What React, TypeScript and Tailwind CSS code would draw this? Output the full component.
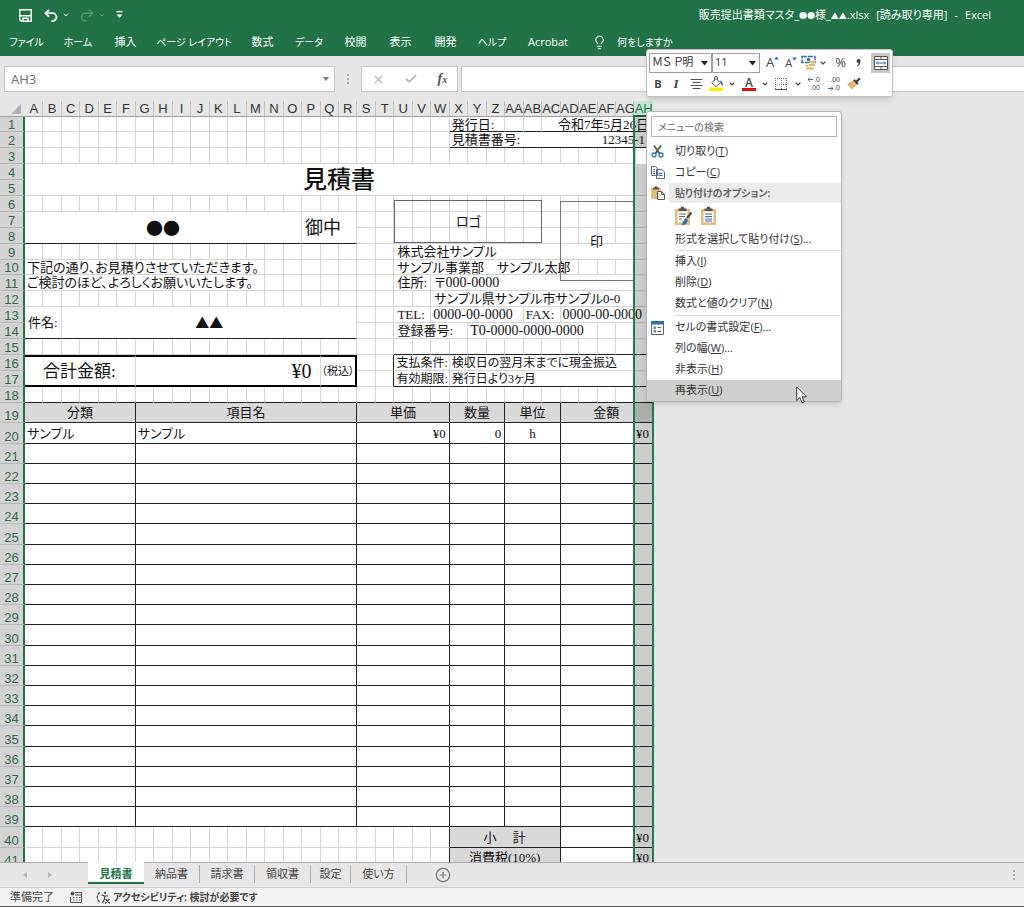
import React from 'react';
import clsx from 'clsx';
import { ChevronDown, Lightbulb, Check, X, CirclePlus } from 'lucide-react';

const ribbonTabs = [
  { label: 'ファイル', width: 'w-[53px]', kana: true },
  { label: 'ホーム', width: 'w-[50px]', kana: true },
  { label: '挿入', width: 'w-[45px]' },
  { label: 'ページ レイアウト', width: 'w-[92px]', kana: true },
  { label: '数式', width: 'w-[45px]' },
  { label: 'データ', width: 'w-[48px]', kana: true },
  { label: '校閲', width: 'w-[45px]' },
  { label: '表示', width: 'w-[45px]' },
  { label: '開発', width: 'w-[45px]' },
  { label: 'ヘルプ', width: 'w-[48px]', kana: true },
  { label: 'Acrobat', width: 'w-[64px]' },
];

const sheetTabs = [
  { label: '納品書', width: 'w-[56px]' },
  { label: '請求書', width: 'w-[55px]' },
  { label: '領収書', width: 'w-[56px]' },
  { label: '設定', width: 'w-[40px]' },
  { label: '使い方', width: 'w-[56px]' },
];

const columns = [
  ...'ABCDEFGHIJKLMNOPQRSTUVWXYZ'.split(''),
  'AA', 'AB', 'AC', 'AD', 'AE', 'AF', 'AG', 'AH',
];

const itemRows = Array.from({ length: 20 }, (_, i) => i + 20);

function rowHeight(n: number) {
  if (n === 1 || n === 10) return 'h-[15px]';
  if (n < 19) return 'h-[16px]';
  return n % 5 === 0 ? 'h-[21px]' : 'h-[20px]';
}

/* ---------- Sheet primitives ---------- */

type CellProps = {
  span?: number;
  rows?: number;
  className?: string;
  children?: React.ReactNode;
};

function Cell({ span = 1, rows = 1, className, children }: CellProps) {
  return (
    <td
      colSpan={span}
      rowSpan={rows}
      className={clsx('border-[#d4d4d4] p-0', className ?? 'border-r border-b')}
    >
      {children}
    </td>
  );
}

function Blank({ n, className }: { n: number; className?: string }) {
  return (
    <>
      {Array.from({ length: n }, (_, i) => (
        <Cell key={i} className={className} />
      ))}
    </>
  );
}

function Row({ n, children }: { n: number; children?: React.ReactNode }) {
  return (
    <tr className={rowHeight(n)}>
      <th
        scope="row"
        className="border-r-2 border-b border-r-[#217346] border-b-[#b8b8b8] bg-[#d3d3d3] p-0 align-bottom [font-family:'Liberation_Sans',sans-serif] text-[13px] font-normal text-[#2d6b4a]"
      >
        {n}
      </th>
      {children}
    </tr>
  );
}

const underline = 'border-b border-b-[#222]';
const boxed = 'border-r border-b border-r-[#222] border-b-[#222]';
const heading = 'border-r border-b border-r-[#222] border-b-[#222] bg-[#d9d9d9] text-center';
const symbol = "[font-family:'Noto_Sans_CJK_JP',sans-serif]";

function Sheet() {
  return (
    <table className="w-[653px] table-fixed border-separate border-spacing-0 bg-white [font-family:'Liberation_Serif','Noto_Sans_CJK_JP',serif] text-[13px] leading-none whitespace-nowrap text-[#111] [font-feature-settings:'palt']">
      <colgroup>
        <col className="w-[25px]" />
        {columns.map((c) => (
          <col key={c} />
        ))}
      </colgroup>
      <thead>
        <tr className="h-[16px] [font-family:'Liberation_Sans',sans-serif] text-[#333]">
          <th aria-label="すべて選択" className="border-b border-[#9f9f9f] bg-[#e6e6e6] p-0">
            <svg width="10" height="10" viewBox="0 0 10 10" className="ml-auto mr-1">
              <path d="M10 0v10H0z" fill="#b1b1b1" />
            </svg>
          </th>
          {columns.map((c) =>
            c === 'AH' ? (
              <th key={c} scope="col" className="relative border-b-2 border-[#217346] bg-[#c5e6d2] p-0 font-normal text-[#217346]">
                {c}
                {/* selected column */}
                <div className="pointer-events-none absolute top-full -right-px -left-px z-10 h-screen border-x-2 border-[#1a7f48] bg-black/20" />
              </th>
            ) : (
              <th key={c} scope="col" className="border-r border-b border-r-[#c3c3c3] border-b-[#9f9f9f] bg-[#e6e6e6] p-0 font-normal">
                {c}
              </th>
            ),
          )}
        </tr>
      </thead>
      <tbody>
        <Row n={1}>
          <Blank n={23} />
          <Cell span={3} className="border-r border-b border-b-[#222] pl-0.5">発行日:</Cell>
          <Blank n={2} className="border-r border-b border-b-[#222]" />
          <Cell span={6} className="border-b border-b-[#222] pr-1 text-right">令和7年5月26日</Cell>
        </Row>
        <Row n={2}>
          <Blank n={23} />
          <Cell span={4} className="border-b border-b-[#222] pl-0.5">見積書番号:</Cell>
          <Cell span={7} className="border-b border-b-[#222] pr-2 text-right">12345-1</Cell>
        </Row>
        <Row n={3}>
          <Blank n={33} />
          <td className="relative p-0">
            <div className="absolute inset-y-0 right-px left-0.5 z-20 bg-white" />
          </td>
        </Row>
        <Row n={4}>
          <Cell span={34} rows={2} className="border-b text-center text-[24px] font-medium">見積書</Cell>
        </Row>
        <Row n={5} />
        <Row n={6}>
          <Blank n={20} />
          <td className="relative border-r border-b border-[#d4d4d4] p-0">
            <div className="absolute top-1 left-0 flex h-[43px] w-[148px] items-center justify-center border border-[#666]">
              ロゴ
            </div>
          </td>
          <Blank n={8} />
          <td className="relative border-r border-b border-[#d4d4d4] p-0">
            <div className="absolute top-[5px] -left-px flex h-20 w-[74px] items-center justify-center border border-[#777]">
              印
            </div>
          </td>
          <Blank n={4} />
        </Row>
        <Row n={7}>
          <Cell span={15} rows={2} className="border-r border-b border-b-[#222] text-center">
            <span className={clsx(symbol, 'text-[17px]')}>●●</span>
          </Cell>
          <Cell span={3} rows={2} className="border-r border-b border-b-[#222] pl-[3px] text-[18px]">御中</Cell>
          <Blank n={16} />
        </Row>
        <Row n={8}>
          <Blank n={16} />
        </Row>
        <Row n={9}>
          <Blank n={20} />
          <Cell span={14} className="border-b pl-[3px]">株式会社サンプル</Cell>
        </Row>
        <Row n={10}>
          <Cell span={13} className="border-r border-b pl-0.5">下記の通り、お見積りさせていただきます。</Cell>
          <Blank n={7} />
          <Cell span={10} className="border-r border-b pl-[3px]">サンプル事業部　サンプル太郎</Cell>
          <Blank n={4} />
        </Row>
        <Row n={11}>
          <Cell span={13} className="border-r border-b pl-0.5">ご検討のほど、よろしくお願いいたします。</Cell>
          <Blank n={7} />
          <Cell span={2} className="border-r border-b pl-[3px]">住所:</Cell>
          <Cell span={12} className="border-b pl-[3px]">〒<span className="text-[14px]">000-0000</span></Cell>
        </Row>
        <Row n={12}>
          <Blank n={22} />
          <Cell span={12} className="border-b pl-[3px]">サンプル県サンプル市サンプル0-0</Cell>
        </Row>
        <Row n={13}>
          <Cell span={2} rows={2} className="border-r border-b border-b-[#222] pl-[3px]">件名:</Cell>
          <Cell span={16} rows={2} className="border-r border-b border-b-[#222] text-center">
            <span className={clsx(symbol, 'text-[14px]')}>▲▲</span>
          </Cell>
          <Blank n={2} />
          <Cell span={2} className="border-r border-b pl-[3px]">TEL:</Cell>
          <Cell span={5} className="border-r border-b pl-0.5 text-[14px]">0000-00-0000</Cell>
          <Cell span={2} className="border-r border-b pl-0.5">FAX:</Cell>
          <Cell span={5} className="border-b pl-0.5 text-[14px]">0000-00-0000</Cell>
        </Row>
        <Row n={14}>
          <Blank n={2} />
          <Cell span={4} className="border-r border-b pl-[3px]">登録番号:</Cell>
          <Cell span={7} className="border-r border-b pl-0.5 text-[14px]">T0-0000-0000-0000</Cell>
          <Blank n={3} />
        </Row>
        <Row n={15}>
          <Blank n={20} />
          <Blank n={14} className="border-r border-b border-b-[#222]" />
        </Row>
        <Row n={16}>
          <Cell span={6} rows={2} className="border-y-2 border-r border-y-black pl-[18px] text-[17px]">合計金額:</Cell>
          <Cell span={10} rows={2} className="border-y-2 border-r border-y-black pr-2 text-right text-[20px]">¥0</Cell>
          <Cell span={2} rows={2} className="border-y-2 border-r-2 border-y-black border-r-black text-center text-[11px]">（税込）</Cell>
          <Blank n={1} />
          <Cell className="border-r border-b border-r-[#222]" />
          <Cell span={3} className="border-r border-b pl-0.5 text-[12px]">支払条件:</Cell>
          <Cell span={11} className="border-b pl-0.5 text-[12px]">検収日の翌月末までに現金振込</Cell>
        </Row>
        <Row n={17}>
          <Blank n={1} />
          <Cell className="border-r border-b border-r-[#222]" />
          <Cell span={3} className="border-r border-b border-b-[#222] pl-0.5 text-[12px]">有効期限:</Cell>
          <Cell span={11} className="border-b border-b-[#222] pl-0.5 text-[12px]">発行日より3ヶ月</Cell>
        </Row>
        <Row n={18}>
          <Blank n={34} className="border-r border-b border-b-[#222]" />
        </Row>
        <Row n={19}>
          <Cell span={6} className={heading}>分類</Cell>
          <Cell span={12} className={heading}>項目名</Cell>
          <Cell span={5} className={heading}>単価</Cell>
          <Cell span={3} className={heading}>数量</Cell>
          <Cell span={3} className={heading}>単位</Cell>
          <Cell span={5} className={heading}>金額</Cell>
        </Row>
        {itemRows.map((n) => (
          <Row key={n} n={n}>
            <Cell span={6} className={clsx(boxed, 'pl-0.5')}>{n === 20 && 'サンプル'}</Cell>
            <Cell span={12} className={clsx(boxed, 'pl-0.5')}>{n === 20 && 'サンプル'}</Cell>
            <Cell span={5} className={clsx(boxed, 'pr-[3px] text-right')}>{n === 20 && '¥0'}</Cell>
            <Cell span={3} className={clsx(boxed, 'pr-[3px] text-right')}>{n === 20 && '0'}</Cell>
            <Cell span={3} className={clsx(boxed, 'text-center')}>{n === 20 && 'h'}</Cell>
            <Cell span={5} className={clsx(underline, 'pr-1 text-right')}>{n === 20 && '¥0'}</Cell>
          </Row>
        ))}
        <Row n={40}>
          <Blank n={22} />
          <Cell className="border-r border-b border-r-[#222]" />
          <Cell span={6} className={heading}>小　 計</Cell>
          <Cell span={5} className={clsx(underline, 'pr-1 text-right')}>¥0</Cell>
        </Row>
        <Row n={41}>
          <Blank n={22} />
          <Cell className="border-r border-b border-r-[#222]" />
          <Cell span={6} className={heading}>消費税(10%)</Cell>
          <Cell span={5} className={clsx(underline, 'pr-1 text-right')}>¥0</Cell>
        </Row>
      </tbody>
    </table>
  );
}

/* ---------- Header ---------- */

function TitleBar() {
  return (
    <div className="flex h-7 items-center pt-0.5 pr-[33px] pl-[19px]">
      <button aria-label="保存">
        <svg width="13" height="13" viewBox="0 0 13 13" fill="none" stroke="#fff" strokeWidth="1.4">
          <path d="M.8.8h11.4v11.4H2.4L.8 10.6zM1 6.8h11M4 12V9.300h5V12" />
        </svg>
      </button>
      <button aria-label="元に戻す" className="ml-3 flex items-center gap-1">
        <svg width="14" height="13" viewBox="0 0 14 13" fill="none" stroke="#fff" strokeWidth="1.8">
          <path d="M5 .8L1.500 4.200 5 7.600M1.700 4.200h6.800a3.900 3.900 0 0 1 0 7.800H7.500" />
        </svg>
        <ChevronDown size={8} color="#fff" strokeWidth={3} />
      </button>
      <button aria-label="やり直し" disabled className="ml-2.5 flex items-center gap-1 opacity-35">
        <svg width="14" height="13" viewBox="0 0 14 13" fill="none" stroke="#a9d8bb" strokeWidth="1.6">
          <path d="M9 .8l3.500 3.400L9 7.600M12.300 4.200H5.500a3.900 3.900 0 0 0 0 7.800h1" />
        </svg>
        <ChevronDown size={8} color="#a9d8bb" strokeWidth={3} />
      </button>
      <button aria-label="クイック アクセス ツール バーのカスタマイズ" className="ml-2.5">
        <svg width="7" height="8" viewBox="0 0 7 8" fill="#fff">
          <path d="M.5 0h6v1.3h-6zM.5 3.500h6l-3 3.200z" />
        </svg>
      </button>
      <h1 className="ml-auto flex gap-[7px]">
        <span>
          販売提出書類マスタ_<span className="text-[8px]">●●</span>様_<span className="text-[8px]">▲▲</span>.xlsx
        </span>
        <span>[読み取り専用]</span>
        <span>-</span>
        <span>Excel</span>
      </h1>
    </div>
  );
}

function FormulaBar() {
  return (
    <div className="flex pt-[10px] pl-1">
      <div className="relative h-[26px] w-[331px]">
        <input
          aria-label="名前ボックス"
          defaultValue="AH3"
          className="h-full w-full border border-[#c6c6c6] bg-white px-1.5 text-[13px] text-[#6b6b6b] outline-none"
        />
        <svg width="6" height="4" viewBox="0 0 6 4" className="absolute top-[11px] right-1.5">
          <path d="M0 0h6L3 4z" fill="#777" />
        </svg>
      </div>
      <div className="flex w-[26px] flex-col items-center justify-center gap-0.5">
        <i className="size-0.5 bg-[#aaa]" />
        <i className="size-0.5 bg-[#aaa]" />
        <i className="size-0.5 bg-[#aaa]" />
      </div>
      <div className="flex w-[97px] items-center justify-around border border-[#c6c6c6] bg-white">
        <button aria-label="キャンセル"><X size={13} color="#b5b5b5" strokeWidth={2.2} /></button>
        <button aria-label="入力"><Check size={14} color="#b5b5b5" strokeWidth={3} /></button>
        <button aria-label="関数の挿入" className="[font-family:'Liberation_Serif',serif] text-[14px] leading-none text-[#555] italic">
          <b className="font-bold">f</b>
          <span className="text-[10px] font-bold">x</span>
        </button>
      </div>
      <input aria-label="数式バー" className="ml-[3px] h-[26px] flex-1 border border-r-0 border-[#c6c6c6] bg-white px-2 outline-none" />
    </div>
  );
}

/* ---------- Floating mini toolbar ---------- */

function Chevron() {
  return <ChevronDown size={8} color="#444" strokeWidth={3.2} />;
}

function MiniSelect({ label, value, className }: { label: string; value: string; className: string }) {
  return (
    <div className={clsx('relative h-5', className)}>
      <select aria-label={label} className="h-full w-full appearance-none border border-[#a0a0a0] bg-white pl-0.5 text-[11px] text-[#333]">
        <option>{value}</option>
      </select>
      <svg width="7" height="5" viewBox="0 0 7 5" className="pointer-events-none absolute top-2 right-1">
        <path d="M0 0h7L3.5 4.5z" fill="#222" />
      </svg>
    </div>
  );
}

function MiniToolbar() {
  return (
    <div className="w-[247px] rounded-[3px] border border-[#c3c3c3] bg-white px-0.5 pt-0.5 pb-0.5 text-[#444] shadow-md">
      <div className="flex h-[21px] items-center">
        <MiniSelect label="フォント" value="ＭＳ Ｐ明" className="w-[63px]" />
        <MiniSelect label="フォント サイズ" value="11" className="w-[48px]" />
        <button aria-label="フォント サイズの拡大" className="ml-1.5 flex text-[13px] leading-none">
          A
          <svg width="5" height="4" viewBox="0 0 5 4"><path d="M0 3.5L2.5.5 5 3.5z" fill="#2f6fb3" /></svg>
        </button>
        <button aria-label="フォント サイズの縮小" className="ml-1.5 flex text-[11px] leading-none">
          A
          <svg width="5" height="4" viewBox="0 0 5 4"><path d="M0 .5h5L2.5 3.5z" fill="#2f6fb3" /></svg>
        </button>
        <button aria-label="通貨表示形式" className="ml-1 flex items-center gap-[3px]">
          <svg width="15" height="15" viewBox="0 0 15 15" fill="none">
            <path d="M1 1.5h13v6H1z" fill="#fff" stroke="#2f6fb3" strokeWidth="1.4" strokeDasharray="5 1" />
            <circle cx="7.5" cy="4.5" r="1.8" fill="#2f6fb3" />
            <path d="M8 6h6v2H8zM8 9h6v2H8zM4 10h3.500v1.600H4zM5 12.500h8v2H5z" fill="#e8b467" />
          </svg>
          <Chevron />
        </button>
        <button aria-label="パーセント スタイル" className="ml-2 text-[13px] leading-none">%</button>
        <button aria-label="桁区切りスタイル" className="ml-2.5">
          <svg width="5" height="8" viewBox="0 0 5 8"><path d="M.5 2a2 2 0 1 1 4 0c0 2.500-1 4.500-3 5.500l-.5-.8c1-.8 1.500-1.600 1.500-2.700A2 2 0 0 1 .5 2z" fill="#444" /></svg>
        </button>
        <button aria-label="セルを結合して中央揃え" className="ml-auto flex h-5 w-[19px] items-center justify-center bg-[#c8c8c8]">
          <svg width="14" height="14" viewBox="0 0 14 14" fill="#fff" stroke="#555">
            <path d="M.5.5h13v13H.5zM.5 3.500h13M.5 10.500h13M7 .5v3M7 10.500v3" />
            <path d="M2.500 7h9M4 5.500L2.500 7 4 8.500M10 5.500L11.500 7 10 8.500" fill="none" stroke="#2f6fb3" />
          </svg>
        </button>
      </div>
      <div className="flex h-[21px] items-center pl-1">
        <button className="w-[10px] text-[11px] leading-none font-bold">B</button>
        <button className="ml-2 w-[10px] [font-family:'Liberation_Serif',serif] text-[13px] leading-none font-bold italic">I</button>
        <button aria-label="中央揃え" className="ml-[9px]">
          <svg width="13" height="11" viewBox="0 0 13 11" stroke="#555"><path d="M.5 1.500h12M2.500 4.500h8M.5 7.500h12M2.500 10.500h8" /></svg>
        </button>
        <button aria-label="塗りつぶしの色" className="ml-1.5 flex items-center gap-1">
          <svg width="15" height="15" viewBox="0 0 15 15" fill="none">
            <path d="M7 2.500l4.500 4.300L7 10.500 2.800 6.800z" fill="#fff" stroke="#555" />
            <path d="M5.500 5V2a1.500 1.500 0 0 1 3 0v2" stroke="#555" />
            <path d="M11 4.500c2 .3 3.200 1.800 2.700 5.500-1.500-.8-1.700-2-2-3.400z" fill="#2f6fb3" />
            <path d="M0 11.500h14V15H0z" fill="#ffed00" />
          </svg>
          <Chevron />
        </button>
        <button aria-label="フォントの色" className="ml-1.5 flex items-center gap-[5px]">
          <span className="flex w-[14px] flex-col items-center">
            <span className="text-[12px] leading-[11px] font-semibold">A</span>
            <span className="h-[3px] w-full bg-[#e00b0b]" />
          </span>
          <Chevron />
        </button>
        <button aria-label="罫線" className="ml-1.5 flex items-center gap-[7px]">
          <svg width="12" height="12" viewBox="0 0 12 12" fill="none" stroke="#777">
            <path d="M.5 0v12M11.500 0v12M6.500 0v12M0 .5h12M0 6.500h12" strokeDasharray="1 1" />
            <path d="M0 11.500h12" stroke="#555" />
          </svg>
          <Chevron />
        </button>
        <button aria-label="小数点以下の表示桁数を増やす" className="relative ml-1 flex h-4 w-[14px] flex-col items-end [font-family:'Liberation_Sans',sans-serif] text-[7px] leading-[8px]">
          <svg width="5" height="5" viewBox="0 0 5 5" className="absolute top-px left-0.5" fill="none" stroke="#2f6fb3"><path d="M0 2.500h5M2 .5l-2 2 2 2" /></svg>
          <span>.0</span>
          <span>.00</span>
        </button>
        <button aria-label="小数点以下の表示桁数を減らす" className="relative ml-1.5 flex h-4 w-[14px] flex-col items-end [font-family:'Liberation_Sans',sans-serif] text-[7px] leading-[8px]">
          <span>.00</span>
          <span>.0</span>
          <svg width="5" height="5" viewBox="0 0 5 5" className="absolute bottom-px left-0.5" fill="none" stroke="#2f6fb3"><path d="M0 2.500h5M3 .5l2 2-2 2" /></svg>
        </button>
        <button aria-label="書式のコピー/貼り付け" className="ml-[7px]">
          <svg width="14" height="13" viewBox="0 0 14 13">
            <path d="M1 6l5-2 3.500 4-4.500 4.500L.5 8z" fill="#e8b467" />
            <path d="M6 3.500l1.500-1.300 1.600 1.300L12 .5 13.700 2l-3 3.200 1 1.500L10 8z" fill="#444" />
          </svg>
        </button>
      </div>
    </div>
  );
}

/* ---------- Context menu ---------- */

function Clipboard({ painted }: { painted?: boolean }) {
  return (
    <svg width="18" height="20" viewBox="0 0 18 20" fill="none">
      <path d="M1 3h15v16H1z" fill="#e5bb79" />
      <path d="M3.500 5.500h10v11h-10z" fill="#fff" />
      <path d="M4.500 5V2.500h2a2 2 0 0 1 4 0h2V5z" fill="#555" />
      {painted ? (
        <>
          <path d="M5 8h7M5 10.500h6M5 13h3" stroke="#666" />
          <path d="M17.500 6.500L13 12" stroke="#444" strokeWidth="2.200" />
          <path d="M8 19.500c.5-4 2-6.500 4-7.500l2 2c-.5 3-2.500 5-6 5.500z" fill="#2f6fb3" />
        </>
      ) : (
        <path d="M5 8h7M5 10.500h7M5 13h7M5 15h7" stroke="#2f6fb3" />
      )}
    </svg>
  );
}

const cutIcon = (
  <svg width="13" height="13" viewBox="0 0 13 13" fill="none">
    <path d="M3 .5l5.500 8M10 .5L4.500 8.500" stroke="#555" strokeWidth="1.700" />
    <circle cx="3" cy="10" r="2" stroke="#2f6fb3" strokeWidth="1.300" />
    <circle cx="10" cy="10" r="2" stroke="#2f6fb3" strokeWidth="1.300" />
  </svg>
);

const copyIcon = (
  <svg width="14" height="13" viewBox="0 0 14 13" fill="#fff" stroke="#5b6b7b">
    <path d="M.5.5h4l2 2v7h-6zM5.500 3.500h5l3 2.500v6.500h-8z" />
    <path d="M2 3.500h2M2 5.500h2M2 7.500h2M7.500 7.500h4M7.500 9.500h4" stroke="#2f6fb3" />
  </svg>
);

const pasteIcon = (
  <svg width="14" height="14" viewBox="0 0 14 14">
    <path d="M0 2h10v11H0z" fill="#e5bb79" />
    <path d="M2 3.500V1.500h1.500a1.500 1.500 0 0 1 3 0H8v2z" fill="#555" />
    <path d="M6.500 5.500h4l3 2.700v5.300h-7z" fill="#fff" stroke="#555" />
    <path d="M10.500 5.500v3h3" fill="none" stroke="#555" />
  </svg>
);

const formatIcon = (
  <svg width="13" height="14" viewBox="0 0 13 14">
    <path d="M.5.5h12v13H.5z" fill="#fff" stroke="#5b6b7b" />
    <path d="M0 0h13v3.500H0z" fill="#2f6fb3" />
    <path d="M3 6h1.500v1.500H3zM3 9.500h1.500V11H3z" fill="none" stroke="#5b6b7b" />
    <path d="M6.500 6.500H10M6.500 10.500H10" stroke="#5b6b7b" />
  </svg>
);

type ItemProps = { icon?: React.ReactNode; label: string; accel: string; more?: boolean; active?: boolean };

function MenuItem({ icon, label, accel, more, active }: ItemProps) {
  return (
    <button role="menuitem" className={clsx('flex h-[21px] w-full items-center text-left', active && 'bg-[#cfcfcf]')}>
      <span className="flex w-[28px] shrink-0 pl-1">{icon}</span>
      <span>
        {label}(<u className="underline-offset-1">{accel}</u>){more && '...'}
      </span>
    </button>
  );
}

function ContextMenu() {
  return (
    <div role="menu" className="w-[196px] rounded-[3px] border border-[#b5b5b5] bg-white pt-1 text-[#333] shadow-md">
      <input
        aria-label="メニューの検索"
        placeholder="メニューの検索"
        className="mx-1 mb-1 block h-[21px] w-[186px] border border-[#b5b5b5] px-1.5 text-[10px] outline-none placeholder:text-[#666]"
      />
      <MenuItem icon={cutIcon} label="切り取り" accel="T" />
      <MenuItem icon={copyIcon} label="コピー" accel="C" />
      <div className="flex h-5 items-center">
        <span className="w-[22px] pl-1">{pasteIcon}</span>
        <span className="flex h-full flex-1 items-center bg-[#ebebeb] pl-1.5 text-[10px] font-bold text-[#666]">貼り付けのオプション:</span>
      </div>
      <div className="flex h-[26px] items-center gap-2 pl-[27px]">
        <button aria-label="貼り付け"><Clipboard painted /></button>
        <button aria-label="値"><Clipboard /></button>
      </div>
      <MenuItem label="形式を選択して貼り付け" accel="S" more />
      <hr className="ml-7 border-[#e0e0e0]" />
      <MenuItem label="挿入" accel="I" />
      <MenuItem label="削除" accel="D" />
      <MenuItem label="数式と値のクリア" accel="N" />
      <hr className="my-px ml-7 border-[#e0e0e0]" />
      <MenuItem icon={formatIcon} label="セルの書式設定" accel="F" more />
      <MenuItem label="列の幅" accel="W" more />
      <MenuItem label="非表示" accel="H" />
      <MenuItem label="再表示" accel="U" active />
    </div>
  );
}

/* ---------- Footer ---------- */

function SheetTabs() {
  return (
    <div className="flex h-[25px] border-t border-[#ababab] bg-[#e6e6e6] text-[11px] text-[#444]">
      <div className="flex w-[88px] items-center gap-5 pl-[23px]">
        <button aria-label="前のシート"><svg width="5" height="6" viewBox="0 0 5 6"><path d="M4 0v6L0 3z" fill="#b5b5b5" /></svg></button>
        <button aria-label="次のシート"><svg width="5" height="6" viewBox="0 0 5 6"><path d="M0 0v6l4-3z" fill="#b5b5b5" /></svg></button>
      </div>
      <button className="-mt-px h-[22px] w-[56px] border-b-2 border-[#217346] bg-white pt-1 font-bold text-[#217346]">見積書</button>
      {sheetTabs.map((tab) => (
        <button key={tab.label} className={clsx('my-0.5 h-[18px] border-r border-[#ababab]', tab.width)}>
          {tab.label}
        </button>
      ))}
      <button aria-label="新しいシート" className="ml-7 self-center">
        <CirclePlus size={16} color="#777" strokeWidth={1.8} />
      </button>
      <div className="mr-[9px] ml-auto flex flex-col items-center justify-center gap-0.5">
        <i className="size-0.5 bg-[#aaa]" />
        <i className="size-0.5 bg-[#aaa]" />
        <i className="size-0.5 bg-[#aaa]" />
      </div>
    </div>
  );
}

function StatusBar() {
  return (
    <div className="flex h-5 items-center border-t border-b border-t-[#cfcfcf] border-b-[#555] bg-[#f3f3f3] pl-[10px] text-[11px] text-[#444]">
      <span>準備完了</span>
      <svg width="12" height="12" viewBox="0 0 12 12" className="ml-4" fill="none" stroke="#555">
        <path d="M5 1.500h6.500v10H.5V6" />
        <path d="M5 4h6M3 6.500h1.500M6 6.500h1.500M9 6.500h1.500M3 9h1.500M6 9h1.500M9 9h1.500" />
        <circle cx="2.500" cy="2.500" r="2" fill="#555" stroke="none" />
      </svg>
      <button className="ml-3.5 flex items-center gap-0.5 text-[10px] font-bold">
        <svg width="15" height="13" viewBox="0 0 15 13" fill="none" stroke="#444" strokeWidth="1.200">
          <path d="M4 1.500C.3 3.500.3 9 4 11" strokeDasharray="3 1" />
          <circle cx="9" cy="1.800" r="1.100" fill="#444" stroke="none" />
          <path d="M5.500 4l3 1h3.500M8.500 5v3l-2 4M9.500 8l4.500 4.500M13.500 8l-4.500 4.500" />
        </svg>
        アクセシビリティ: 検討が必要です
      </button>
    </div>
  );
}

export default function App() {
  return (
    <div className="relative flex h-screen flex-col overflow-hidden bg-[#e6e6e6] [font-family:'Open_Sans','Noto_Sans_CJK_JP',sans-serif] text-[11px] [font-feature-settings:'palt']">
      <header className="bg-[#217346] text-white">
        <TitleBar />
        <nav className="flex h-7 items-center whitespace-nowrap">
          {ribbonTabs.map((tab) => (
            <button key={tab.label} className={clsx('flex shrink-0 justify-center', tab.width, tab.kana && 'text-[10px]')}>
              {tab.label}
            </button>
          ))}
          <button className="ml-3 flex items-center gap-2.5 text-[10px]">
            <Lightbulb size={15} strokeWidth={1.8} />
            何をしますか
          </button>
        </nav>
      </header>

      <FormulaBar />

      <main className="mt-[9px] min-h-0 flex-1 overflow-hidden">
        <Sheet />
      </main>

      <SheetTabs />
      <StatusBar />

      {/* Right-click popups over the sheet */}
      <div className="absolute top-[49px] left-[646px] z-30">
        <MiniToolbar />
      </div>
      <div className="absolute top-[111px] left-[646px] z-30">
        <ContextMenu />
      </div>
      <svg width="12" height="18" viewBox="0 0 12 18" className="absolute top-[386px] left-[796px] z-40">
        <path d="M.7 1v13.500l3.200-3 2.200 5.300 2.200-1-2.200-5h4.400z" fill="#fff" stroke="#333" />
      </svg>
    </div>
  );
}
